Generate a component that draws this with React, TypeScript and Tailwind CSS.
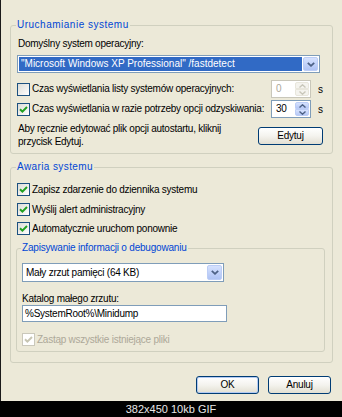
import React from "react";

const Check = ({ disabled }: { disabled?: boolean }) => (
  <svg width="9" height="9" viewBox="0 0 9 9">
    <path
      d="M1 4.2 L3.4 6.6 L8 2"
      fill="none"
      stroke={disabled ? "#c7c5b2" : "#21a121"}
      strokeWidth="2"
    />
  </svg>
);

function CheckBox({ checked, disabled }: { checked?: boolean; disabled?: boolean }) {
  return (
    <span
      className={
        disabled
          ? "w-[13px] h-[13px] shrink-0 border border-[#cac8bb] bg-white flex items-center justify-center"
          : "w-[13px] h-[13px] shrink-0 border border-[#1c5180] bg-linear-to-br from-[#dcdcd7] to-white flex items-center justify-center"
      }
    >
      {checked && <Check disabled={disabled} />}
    </span>
  );
}

const Chevron = ({ up, color }: { up?: boolean; color: string }) => (
  <svg width="7" height="4" viewBox="0 0 7 4">
    <path d={up ? "M0.5 3.5 L3.5 0.8 L6.5 3.5" : "M0.5 0.5 L3.5 3.2 L6.5 0.5"} fill="none" stroke={color} strokeWidth="1.4" />
  </svg>
);

function ComboButton() {
  return (
    <span className="w-[15px] m-[1px] rounded-[2px] border border-[#bccdf6] bg-linear-to-b from-[#d6e2fe] to-[#afc3f4] flex items-center justify-center">
      <svg width="8" height="5" viewBox="0 0 8 5">
        <path d="M0.8 0.8 L4 3.8 L7.2 0.8" fill="none" stroke="#4d6185" strokeWidth="1.8" />
      </svg>
    </span>
  );
}

function Spin({ value, disabled }: { value: string; disabled?: boolean }) {
  return (
    <div
      className={
        disabled
          ? "w-[40px] h-[18px] border border-[#c9c7ba] bg-white flex"
          : "w-[40px] h-[18px] border border-[#7f9db9] bg-white flex"
      }
    >
      <span className={disabled ? "flex-1 pl-[4px] leading-[16px] text-[#aca899]" : "flex-1 pl-[4px] leading-[16px]"}>
        {value}
      </span>
      <div className="w-[15px] py-[1px] pr-[1px] flex flex-col">
        <div
          className={
            disabled
              ? "flex-1 rounded-t-[2px] border border-[#e8e6dc] bg-[#f4f3ee] flex items-center justify-center"
              : "flex-1 rounded-t-[2px] border border-[#bccdf6] bg-linear-to-b from-[#d6e2fe] to-[#b6c8f5] flex items-center justify-center"
          }
        >
          <Chevron up color={disabled ? "#c9c7ba" : "#4d6185"} />
        </div>
        <div
          className={
            disabled
              ? "flex-1 rounded-b-[2px] border border-[#e8e6dc] bg-[#f4f3ee] flex items-center justify-center"
              : "flex-1 rounded-b-[2px] border border-[#bccdf6] bg-linear-to-b from-[#d6e2fe] to-[#b6c8f5] flex items-center justify-center"
          }
        >
          <Chevron color={disabled ? "#c9c7ba" : "#4d6185"} />
        </div>
      </div>
    </div>
  );
}

export default function App() {
  return (
    <div className="w-[342px] h-[417px] flex flex-col bg-black font-['Liberation_Sans',Arial,sans-serif] text-[10px] text-black">
      <div className="h-[401px] bg-[#ece9d8] border-l border-[#1a1a1a] pl-[9px] pr-[9px] pt-[19px] flex flex-col tracking-[-0.25px]">
        {/* Group 1 */}
        <fieldset className="min-w-0 border border-[#d0d0bf] rounded-[3px] pl-[6px] pr-[8px] pb-[5px]">
          <legend className="ml-[-1px] px-[1px] leading-[12px] text-[#0046d5] tracking-[0.5px]">Uruchamianie systemu</legend>
          <div className="mt-[7px] leading-[12px] pl-[1px]">Domyślny system operacyjny:</div>
          <div className="mt-[5px] w-[303px] h-[18px] border border-[#7f9db9] bg-white flex">
            <span className="flex-1 m-[1px] mr-0 bg-[#316ac5] text-white leading-[14px] pl-[2px] whitespace-nowrap overflow-hidden tracking-normal">
              "Microsoft Windows XP Professional" /fastdetect
            </span>
            <ComboButton />
          </div>
          <div className="mt-[7px] h-[18px] flex items-center justify-between">
            <div className="flex items-center gap-[2px] whitespace-nowrap">
              <CheckBox />
              <span className="leading-[12px]">Czas wyświetlania listy systemów operacyjnych:</span>
            </div>
            <div className="flex items-center gap-[7px]">
              <Spin value="0" disabled />
              <span className="w-[6px]">s</span>
            </div>
          </div>
          <div className="mt-[2px] h-[18px] flex items-center justify-between">
            <div className="flex items-center gap-[2px] whitespace-nowrap">
              <CheckBox checked />
              <span className="leading-[12px]">Czas wyświetlania w razie potrzeby opcji odzyskiwania:</span>
            </div>
            <div className="flex items-center gap-[7px]">
              <Spin value="30" />
              <span className="w-[6px]">s</span>
            </div>
          </div>
          <div className="mt-[4px] flex items-start justify-between">
            <div className="leading-[13px] pl-[1px] whitespace-nowrap">
              Aby ręcznie edytować plik opcji autostartu, kliknij
              <br />
              przycisk Edytuj.
            </div>
            <button className="mt-[5px] mr-[1px] w-[65px] h-[18px] rounded-[3px] border border-[#003c74] bg-linear-to-b from-white via-[#f4f3ee] to-[#e2dfd2] leading-[16px]">
              Edytuj
            </button>
          </div>
        </fieldset>

        {/* Group 2 */}
        <fieldset className="mt-[7px] min-w-0 border border-[#d0d0bf] rounded-[3px] pl-[6px] pr-[8px] pb-[10px]">
          <legend className="ml-[-1px] px-[1px] leading-[12px] text-[#0046d5] tracking-[0.4px]">Awaria systemu</legend>
          <div className="mt-[10px] flex items-center gap-[2px]">
            <CheckBox checked />
            <span className="leading-[12px]">Zapisz zdarzenie do dziennika systemu</span>
          </div>
          <div className="mt-[7px] flex items-center gap-[2px]">
            <CheckBox checked />
            <span className="leading-[12px]">Wyślij alert administracyjny</span>
          </div>
          <div className="mt-[6px] flex items-center gap-[2px]">
            <CheckBox checked />
            <span className="leading-[12px]">Automatycznie uruchom ponownie</span>
          </div>

          <fieldset className="mt-[7px] ml-[-1px] mr-[-1px] min-w-0 border border-[#d0d0bf] rounded-[3px] pl-[5px] pr-[5px] pb-[5px]">
            <legend className="ml-[-1px] px-[1px] leading-[12px] text-[#0046d5] tracking-[-0.2px]">
              Zapisywanie informacji o debugowaniu
            </legend>
            <div className="mt-[9px] w-[202px] h-[19px] border border-[#7f9db9] bg-white flex">
              <span className="flex-1 leading-[17px] pl-[3px] whitespace-nowrap">Mały zrzut pamięci (64 KB)</span>
              <ComboButton />
            </div>
            <div className="mt-[11px] leading-[12px]">Katalog małego zrzutu:</div>
            <div className="w-[205px] h-[17px] border border-[#7f9db9] bg-white leading-[15px] pl-[2px]">
              %SystemRoot%\Minidump
            </div>
            <div className="mt-[11px] flex items-center gap-[2px] text-[#aca899]">
              <CheckBox checked disabled />
              <span className="leading-[12px]">Zastąp wszystkie istniejące pliki</span>
            </div>
          </fieldset>
        </fieldset>

        <div className="mt-[13px] pr-[2px] flex justify-end gap-[9px]">
          <button className="w-[63px] h-[18px] rounded-[3px] border border-[#003c74] bg-linear-to-b from-white via-[#f4f3ee] to-[#e2dfd2] shadow-[inset_0_0_0_1px_#b3caf2] leading-[16px]">
            OK
          </button>
          <button className="w-[63px] h-[18px] rounded-[3px] border border-[#003c74] bg-linear-to-b from-white via-[#f4f3ee] to-[#e2dfd2] leading-[16px]">
            Anuluj
          </button>
        </div>
      </div>
      <div className="flex-1 flex items-center justify-center text-[11px] leading-[16px] text-[#e8e8e8] whitespace-pre">
        382x450 10kb GIF
      </div>
    </div>
  );
}
